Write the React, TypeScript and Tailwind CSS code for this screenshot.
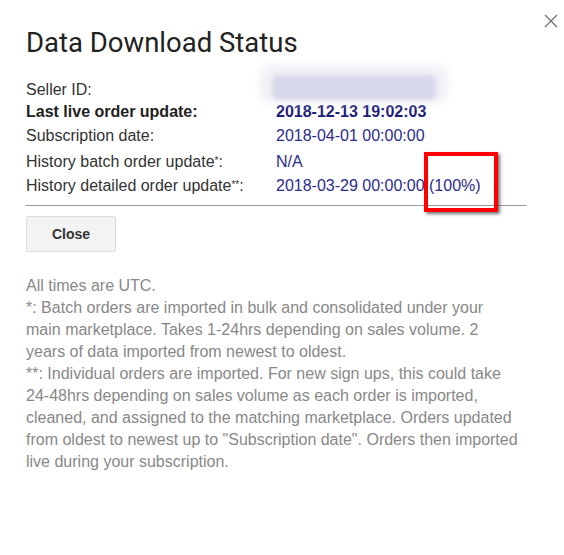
import React from 'react'

const rows = [
  { label: 'Seller ID:', value: '', h: 'h-[23px]' },
  { label: 'Last live order update:', value: '2018-12-13 19:02:03', bold: true, h: 'h-[22px]' },
  { label: 'Subscription date:', value: '2018-04-01 00:00:00', h: 'h-[26px]' },
  { label: 'History batch order update', sup: '*', value: 'N/A', h: 'h-[26px]' },
  { label: 'History detailed order update', sup: '**', value: '2018-03-29 00:00:00 (100%)', h: 'h-[22px]' },
]

export default function App() {
  return (
    <div className="relative w-[564px] h-[555px] bg-white font-['Liberation_Sans',Arial,sans-serif] text-[16px]">
      {/* close icon */}
      <button className="absolute right-[5px] top-[13px] w-[16px] h-[16px] text-[#777]">
        <svg viewBox="0 0 16 16" width="16" height="16" fill="none" stroke="currentColor" strokeWidth="1.4">
          <path d="M2 2 L14 14 M14 2 L2 14" />
        </svg>
      </button>

      <div className="flex flex-col pl-[26px] pr-[38px] pt-[28px]">
        <h1 className="font-['Roboto',sans-serif] text-[27.5px] leading-[30px] text-[#222] font-normal">
          Data Download Status
        </h1>

        {/* status table */}
        <div className="relative flex flex-col mt-[20px]">
          {rows.map((r, i) => (
            <div key={i} className={`flex items-center ${r.h}`}>
              <div className={`w-[250px] ${r.bold ? 'font-bold text-[#222]' : 'text-[#333]'}`}>
                {r.label}
                {r.sup && <sup className="text-[10px] relative top-[-3px]">{r.sup}</sup>}
                {r.sup && ':'}
              </div>
              <div className={r.bold ? 'font-bold text-[#1d1d7a]' : 'text-[#2c2c8a]'}>
                {r.value}
              </div>
            </div>
          ))}
          {/* redaction blur */}
          <div className="absolute left-[234px] top-[-12px] w-[188px] h-[36px] rounded-[10px] bg-[#f0f0f5] blur-[4px]" />
          <div className="absolute left-[246px] top-[-3px] w-[164px] h-[25px] rounded-[6px] bg-[#d8d8ec] blur-[2px]" />
          {/* highlight box */}
          <div className="absolute left-[398px] top-[74px] w-[74px] h-[60px] border-[4px] border-[#ff0000] shadow-[2px_2px_3px_rgba(0,0,0,0.55)]" />
        </div>

        <div className="mt-[8px] w-[500px] h-[1px] bg-[#999]" />

        <button className="mt-[10px] w-[90px] h-[36px] bg-[#f3f3f3] border border-[#ddd] rounded-[2px] text-[14px] font-bold text-[#333]">
          Close
        </button>

        <div className="mt-[23px] w-[494px] text-[#888] leading-[22px]">
          <p>All times are UTC.</p>
          <p>
            *: Batch orders are imported in bulk and consolidated under your main marketplace. Takes 1-24hrs
            depending on sales volume. 2 years of data imported from newest to oldest.
          </p>
          <p>
            **: Individual orders are imported. For new sign ups, this could take 24-48hrs depending on sales
            volume as each order is imported, cleaned, and assigned to the matching marketplace. Orders updated
            from oldest to newest up to "Subscription date". Orders then imported live during your subscription.
          </p>
        </div>
      </div>
    </div>
  )
}
